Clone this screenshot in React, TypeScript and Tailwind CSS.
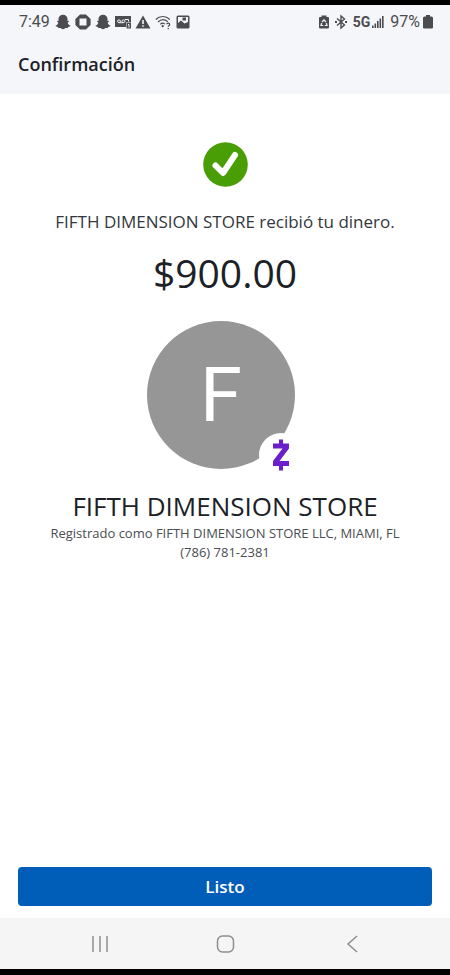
import type { ReactNode } from "react";

function Icon({ className, viewBox = "0 0 16 16", children }: { className: string; viewBox?: string; children: ReactNode }) {
  return (
    <svg className={className} viewBox={viewBox} fill="currentColor" aria-hidden="true">
      {children}
    </svg>
  );
}

function Ghost() {
  return (
    <Icon className="h-4 w-4">
      <path d="M8 .8C5.500.8 3.500 2.500 3.500 4.800v2.100l-1.200-.2-.2.8 1.200 1.200C3 10 2 11 .6 11.600c0 1 1.200 1.300 2.200 1.500l.5 1 2.200-.1c.8.500 1.400 1.200 2.500 1.200s1.700-.7 2.500-1.200l2.200.1.500-1c1-.2 2.200-.5 2.200-1.500-1.400-.6-2.400-1.600-2.700-2.900l1.200-1.200-.2-.8-1.200.2V4.800C12.500 2.500 10.500.8 8 .8z" />
    </Icon>
  );
}

function StatusBar() {
  return (
    <div className="flex h-[34px] items-center justify-between pr-4 pl-[19px] font-['Roboto',sans-serif] text-[#4b4c4f]">
      <div className="flex items-center gap-1">
        <span className="mr-px text-base">7:49</span>
        <Ghost />
        <Icon className="h-4 w-4">
          <path d="M5 .4h6L15.600 5v6L11 15.600H5L.4 11V5z" />
          <path d="M4.500 4.500h7v7h-7z" fill="#f5f6f9" />
        </Icon>
        <Ghost />
        <Icon className="h-4 w-4">
          <path d="M0 2h16v6.500h-5V13H0z" />
          <path d="M11.500 9H16v5.500h-4.500z" />
          <path d="M2.500 7.200a1.500 1.300 0 1 0 3 0 1.500 1.300 0 1 0-3 0M7 7.200a1.500 1.300 0 1 0 3 0 1.500 1.300 0 1 0-3 0M4 8.700h4.500M10 5.500h3.500v2" fill="none" stroke="#f5f6f9" />
          <path d="M13 10.500h1v3" fill="none" stroke="#f5f6f9" />
        </Icon>
        <Icon className="h-4 w-4">
          <path d="M8 1.500 15.500 14.500H.5z" />
          <path d="M7.200 6h1.600v4H7.200zM7.200 11.200h1.600v1.600H7.200z" fill="#f5f6f9" />
        </Icon>
        <Icon className="h-4 w-4">
          <path d="M.8 5.500c4-4 10-4 14 0M3 8c3-3 6.800-3 9.800-.2M5.200 10.400c1.500-1.500 3.200-1.500 4.700-.3" fill="none" stroke="currentColor" strokeWidth="1.200" />
          <path d="M6.200 12 7.700 13.500 9.200 12 7.700 10.800z" />
          <path d="M11.700 10.300c.1-1.500 3-1.500 3 .1 0 1-1.500 1.100-1.500 2.300M13.200 14v1.300" fill="none" stroke="currentColor" strokeWidth="1.200" />
        </Icon>
        <Icon className="h-4 w-4">
          <path fillRule="evenodd" d="M3 1.500h10a1.500 1.500 0 0 1 1.500 1.500v10a1.500 1.500 0 0 1-1.500 1.500H3A1.500 1.500 0 0 1 1.500 13V3A1.500 1.500 0 0 1 3 1.500zM3 3v6l3-2.500L9.500 9.500 13 8V3z" />
          <path d="M7.500 3.500h3.500v3H7.500z" />
        </Icon>
      </div>
      <div className="flex items-center">
        <Icon className="h-4 w-4">
          <path d="M5.500 1.500h5V3H12a1 1 0 0 1 1 1v9.500a1 1 0 0 1-1 1H4a1 1 0 0 1-1-1V4a1 1 0 0 1 1-1h1.500z" />
          <path d="M6 8 8 5.800 10 8M5.600 9.200 5 11.500h2.200M10.400 9.200l.6 2.300H8.800" fill="none" stroke="#f5f6f9" strokeWidth="1.200" />
        </Icon>
        <Icon className="mr-1 ml-px h-4 w-4">
          <path d="M4 4.500 11.500 11 8 14V2l3.500 3L4 11.500" fill="none" stroke="currentColor" strokeWidth="1.400" />
          <path d="M2 7h2v2H2zM12 7h2v2h-2z" />
        </Icon>
        <span className="text-sm font-bold">5G</span>
        <Icon className="ml-0.5 h-4 w-3" viewBox="0 0 12 16">
          <path d="M0 11.500h1.600V14H0zM2.500 9.500h1.600V14H2.500zM5 7h1.600v7H5zM7.500 4.500h1.600V14H7.500zM10 2h1.600v12H10z" />
        </Icon>
        <span className="ml-1.5 text-base">97%</span>
        <Icon className="ml-0.5 h-4 w-3" viewBox="0 0 12 16">
          <path d="M4 1h4v1.500h1.500A1.500 1.500 0 0 1 11 4v9.500a1 1 0 0 1-1 1H2a1 1 0 0 1-1-1V4a1.500 1.500 0 0 1 1.500-1.500H4z" />
        </Icon>
      </div>
    </div>
  );
}

export default function App() {
  return (
    <div className="flex min-h-screen flex-col border-t-[5px] border-b-[6px] border-black bg-white font-['Open_Sans',sans-serif] text-[#1c2128]">
      <header className="h-[89px] bg-[#f5f6f9]">
        <StatusBar />
        <h1 className="px-[18px] pt-[11px] text-[18px] leading-7 font-semibold">Confirmación</h1>
      </header>

      <main className="flex flex-1 flex-col items-center pt-12 text-center">
        <svg className="h-[45px] w-[45px]" viewBox="0 0 45 45" aria-hidden="true">
          <circle cx="22.500" cy="22.500" r="22.300" fill="#4a9e05" />
          <path d="M12.500 23.500 20 31 32 13" fill="none" stroke="#fff" strokeWidth="6" strokeLinecap="round" strokeLinejoin="round" />
        </svg>
        <p className="mt-[23px] text-[17px] leading-6 text-[#33373d]">FIFTH DIMENSION STORE recibió tu dinero.</p>
        <p className="mt-[15px] text-[39px] leading-[48px]">$900.00</p>

        <div className="relative mt-6 mr-2 flex h-[148px] w-[148px] items-center justify-center rounded-full bg-[#969696]">
          <span className="font-['Roboto',sans-serif] text-[76px] text-white">F</span>
          <span className="absolute -right-2 -bottom-2 flex h-11 w-11 items-center justify-center rounded-full bg-white">
            <svg className="h-8 w-5" viewBox="0 0 20 32" role="img" aria-label="Zelle">
              <path d="M2 4.500h16v5L8.500 22H18v5H2v-5L11.500 9.500H2zM8 .5h4V5H8zM8 27h4v4.500H8z" fill="#6a1fcb" />
            </svg>
          </span>
        </div>

        <h2 className="mt-[19px] text-[26px] leading-9">FIFTH DIMENSION STORE</h2>
        <p className="text-[13px] leading-[19px] text-[#4a4d52]">
          Registrado como FIFTH DIMENSION STORE LLC, MIAMI, FL
          <br />
          (786) 781-2381
        </p>
      </main>

      <div className="px-[18px] pb-3">
        <button type="button" className="h-[39px] w-full rounded bg-[#015eb8] text-[17px] font-semibold text-white">
          Listo
        </button>
      </div>

      <nav className="flex h-[51px] items-center justify-around bg-[#f5f5f5] px-[37px] text-[#8e8e8e]">
        <button type="button" aria-label="Recientes">
          <svg className="h-5 w-5" viewBox="0 0 20 20" fill="none" stroke="currentColor" strokeWidth="1.500">
            <path d="M3 2v16M10 2v16M17 2v16" />
          </svg>
        </button>
        <button type="button" aria-label="Inicio">
          <svg className="h-5 w-5" viewBox="0 0 20 20" fill="none" stroke="currentColor" strokeWidth="1.500">
            <rect x="2.500" y="2" width="16" height="16" rx="5" />
          </svg>
        </button>
        <button type="button" aria-label="Atrás">
          <svg className="h-5 w-5" viewBox="0 0 20 20" fill="none" stroke="currentColor" strokeWidth="1.500">
            <path d="M17 2 8 10l9 8" />
          </svg>
        </button>
      </nav>
    </div>
  );
}
